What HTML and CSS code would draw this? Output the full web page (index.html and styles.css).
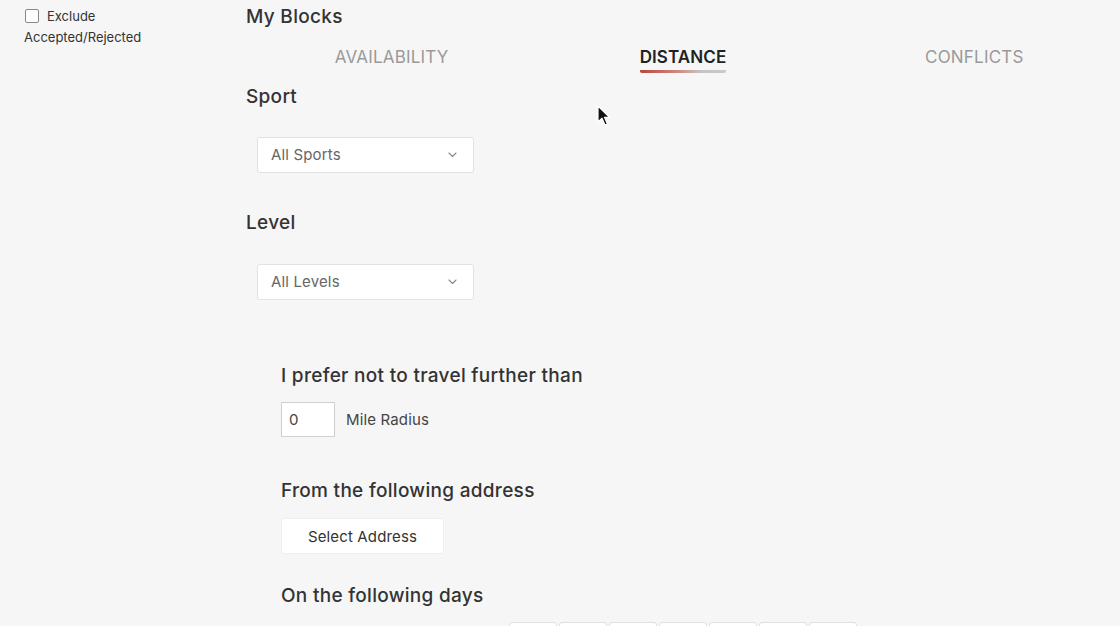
FILE: index.html
```html
<!DOCTYPE html>
<html lang="en">
<head>
<meta charset="utf-8">
<title>My Blocks</title>
<link rel="stylesheet" href="styles.css">
</head>
<body>
<div class="page">
  <aside class="sidebar">
    <label class="exclude">
      <span class="check-row"><span class="checkbox"></span><span class="exclude-word">Exclude</span></span>
      <span class="exclude-rest">Accepted/Rejected</span>
    </label>
  </aside>
  <main class="main">
    <h1 class="title">My Blocks</h1>
    <nav class="tabs">
      <div class="tab"><span class="tab-label">AVAILABILITY</span></div>
      <div class="tab active"><span class="tab-label">DISTANCE</span></div>
      <div class="tab"><span class="tab-label">CONFLICTS</span></div>
    </nav>

    <h2 class="heading sport-h">Sport</h2>
    <div class="select">
      <span class="select-text">All Sports</span>
      <svg class="chev" width="9" height="6" viewBox="0 0 9 6"><path d="M1 1 L4.5 4.5 L8 1" fill="none" stroke="#888" stroke-width="1.1" stroke-linecap="round" stroke-linejoin="round"/></svg>
    </div>

    <h2 class="heading level-h">Level</h2>
    <div class="select">
      <span class="select-text">All Levels</span>
      <svg class="chev" width="9" height="6" viewBox="0 0 9 6"><path d="M1 1 L4.5 4.5 L8 1" fill="none" stroke="#888" stroke-width="1.1" stroke-linecap="round" stroke-linejoin="round"/></svg>
    </div>

    <section class="distance">
      <h2 class="heading travel-h">I prefer not to travel further than</h2>
      <div class="radius-row">
        <div class="num-input">0</div>
        <span class="radius-label">Mile Radius</span>
      </div>

      <h2 class="heading address-h">From the following address</h2>
      <button class="addr-btn" type="button">Select Address</button>

      <h2 class="heading days-h">On the following days</h2>
      <div class="days">
        <div class="day"></div>
        <div class="day"></div>
        <div class="day"></div>
        <div class="day"></div>
        <div class="day"></div>
        <div class="day"></div>
        <div class="day"></div>
      </div>
    </section>
  </main>
</div>
<svg class="cursor" width="14" height="22" viewBox="0 0 14 22">
  <path d="M1 1 L1 17 L5 13.2 L8 20 L10.4 19 L7.5 12.3 L12.5 12.3 Z" fill="#111" stroke="#fff" stroke-width="1.2" stroke-linejoin="round"/>
</svg>
</body>
</html>
```

FILE: styles.css
```css
html, body {
  margin: 0;
  padding: 0;
  overflow: hidden;
  height: 100%;
}
body {
  background: #f6f6f6;
  font-family: Inter, "Noto Sans", "Liberation Sans", sans-serif;
  color: #333;
  position: relative;
}
.page {
  display: flex;
  align-items: flex-start;
}
.sidebar {
  width: 246px;
  flex: none;
  padding-left: 24px;
  box-sizing: border-box;
}
.exclude {
  display: flex;
  flex-direction: column;
  font-size: 13px;
  color: #333;
}
.check-row {
  display: flex;
  align-items: center;
  margin-top: 8px;
  height: 15px;
}
.checkbox {
  width: 12px;
  height: 12px;
  border: 1px solid #888;
  border-radius: 2px;
  background: #fff;
  margin-left: 1px;
  margin-right: 8px;
}
.exclude-word {
  line-height: 15px;
  margin-top: 2px;
}
.exclude-rest {
  margin-top: 7px;
  line-height: 15px;
}
.main {
  flex: 1;
  display: flex;
  flex-direction: column;
  align-items: flex-start;
}
.title {
  margin: 6px 0 0 0;
  font-size: 19px;
  line-height: 22px;
  letter-spacing: 0.3px;
  font-weight: 500;
  color: #333;
}
.tabs {
  display: flex;
  align-self: stretch;
  margin-top: 18px;
}
.tab {
  flex: 1;
  display: flex;
  justify-content: center;
}
.tab-label {
  font-size: 17px;
  line-height: 22px;
  letter-spacing: 0.2px;
  color: #9a9a9a;
  font-weight: 400;
  padding-bottom: 5px;
}
.tab.active .tab-label {
  color: #222;
  font-weight: 600;
  letter-spacing: 0.1px;
  background-image: linear-gradient(to right, #b9463d 0%, #d08a84 45%, #c4c4c4 70%, #c9c9c9 100%);
  background-size: 100% 3px;
  background-position: left bottom;
  background-repeat: no-repeat;
  border-radius: 2px;
}
.heading {
  margin: 0;
  font-size: 19px;
  line-height: 24px;
  letter-spacing: 0.3px;
  font-weight: 500;
  color: #333;
}
.sport-h { margin-top: 12px; }
.level-h { margin-top: 38px; }
.select {
  margin: 28px 0 0 11px;
  width: 217px;
  height: 36px;
  box-sizing: border-box;
  background: #fff;
  border: 1px solid #e2e2e2;
  border-radius: 3px;
  display: flex;
  align-items: center;
  justify-content: space-between;
  padding: 0 16px 0 13px;
}
.level-h + .select { margin-top: 29px; }
.select-text {
  font-size: 15px;
  letter-spacing: 0.15px;
  color: #666;
  margin-top: -1px;
}
.distance {
  margin-left: 35px;
  margin-top: 64px;
  display: flex;
  flex-direction: column;
  align-items: flex-start;
}
.radius-row {
  display: flex;
  align-items: center;
  margin-top: 14px;
}
.num-input {
  width: 54px;
  height: 35px;
  box-sizing: border-box;
  background: #fff;
  border: 1px solid #cfcfcf;
  padding-left: 7px;
  font-size: 15px;
  line-height: 33px;
  color: #444;
}
.radius-label {
  margin-left: 11px;
  font-size: 15px;
  letter-spacing: 0.15px;
  color: #444;
}
.address-h { margin-top: 42px; }
.addr-btn {
  margin-top: 15px;
  width: 163px;
  height: 36px;
  background: #fff;
  border: 1px solid #efefef;
  border-radius: 2px;
  font-family: inherit;
  font-size: 15px;
  letter-spacing: 0.15px;
  color: #333;
  padding: 0;
}
.days-h { margin-top: 30px; }
.days {
  display: flex;
  gap: 2px;
  margin-top: 14px;
  margin-left: 228px;
}
.day {
  width: 48px;
  height: 36px;
  box-sizing: border-box;
  background: #fff;
  border: 1px solid #e0e0e0;
  border-radius: 3px;
}
.cursor {
  position: absolute;
  left: 597px;
  top: 105px;
}
```
